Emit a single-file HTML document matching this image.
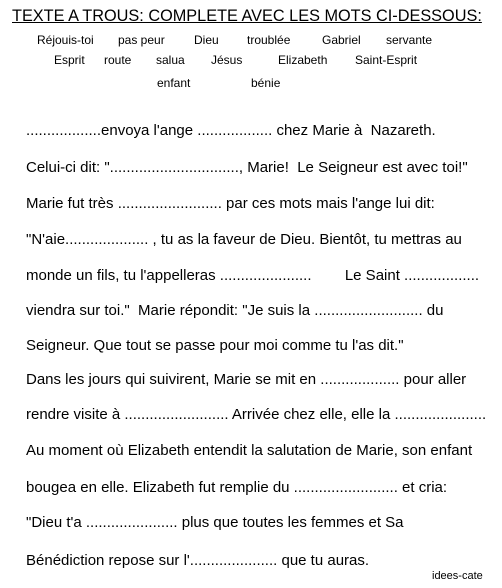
<!DOCTYPE html>
<html><head><meta charset="utf-8"><style>
body{margin:0;width:502px;height:588px;background:#fff;position:relative;overflow:hidden;font-family:"Liberation Sans",Arial,sans-serif;color:#000}
.a{position:absolute;white-space:pre;line-height:1}
.w{font-size:12px}
.l{font-size:15px;left:26px}
</style></head><body>
<div class="a" style="left:12px;top:8px;font-size:16.3px;text-decoration:underline">TEXTE A TROUS: COMPLETE AVEC LES MOTS CI-DESSOUS:</div>
<div class="a w" style="left:37px;top:34px">Réjouis-toi</div>
<div class="a w" style="left:118px;top:34px">pas peur</div>
<div class="a w" style="left:194px;top:34px">Dieu</div>
<div class="a w" style="left:247px;top:34px">troublée</div>
<div class="a w" style="left:322px;top:34px">Gabriel</div>
<div class="a w" style="left:386px;top:34px">servante</div>
<div class="a w" style="left:54px;top:54px">Esprit</div>
<div class="a w" style="left:104px;top:54px">route</div>
<div class="a w" style="left:156px;top:54px">salua</div>
<div class="a w" style="left:211px;top:54px">Jésus</div>
<div class="a w" style="left:278px;top:54px">Elizabeth</div>
<div class="a w" style="left:355px;top:54px">Saint-Esprit</div>
<div class="a w" style="left:157px;top:77px">enfant</div>
<div class="a w" style="left:251px;top:77px">bénie</div>
<div class="a l" style="top:123px">..................envoya l'ange .................. chez Marie à  Nazareth.</div>
<div class="a l" style="top:160px">Celui-ci dit: "..............................., Marie!  Le Seigneur est avec toi!"</div>
<div class="a l" style="top:196px">Marie fut très ......................... par ces mots mais l'ange lui dit:</div>
<div class="a l" style="top:232px">"N'aie.................... , tu as la faveur de Dieu. Bientôt, tu mettras au</div>
<div class="a l" style="top:268px">monde un fils, tu l'appelleras ......................        Le Saint ..................</div>
<div class="a l" style="top:303px">viendra sur toi."  Marie répondit: "Je suis la .......................... du</div>
<div class="a l" style="top:338px">Seigneur. Que tout se passe pour moi comme tu l'as dit."</div>
<div class="a l" style="top:372px">Dans les jours qui suivirent, Marie se mit en ................... pour aller</div>
<div class="a l" style="top:407px">rendre visite à ......................... Arrivée chez elle, elle la ......................</div>
<div class="a l" style="top:443px">Au moment où Elizabeth entendit la salutation de Marie, son enfant</div>
<div class="a l" style="top:480px">bougea en elle. Elizabeth fut remplie du ......................... et cria:</div>
<div class="a l" style="top:515px">"Dieu t'a ...................... plus que toutes les femmes et Sa</div>
<div class="a l" style="top:553px">Bénédiction repose sur l'..................... que tu auras.</div>
<div class="a" style="left:432px;top:571px;font-size:11px">idees-cate</div>
</body></html>
